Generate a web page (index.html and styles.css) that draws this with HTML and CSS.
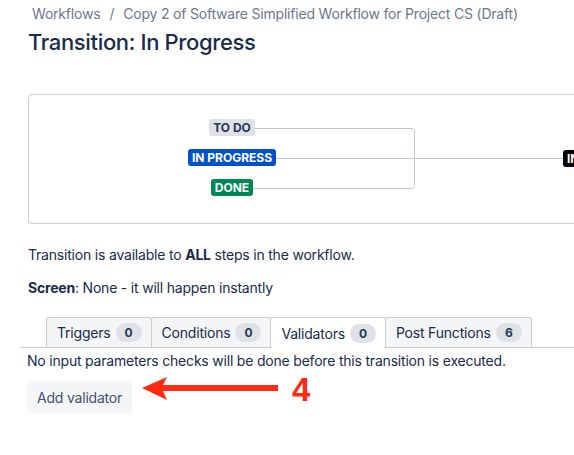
FILE: index.html
```html
<!DOCTYPE html>
<html lang="en">
<head>
    <meta charset="UTF-8">
    <meta name="viewport" content="width=device-width, initial-scale=1.0">
    <title>Transition: In Progress</title>
    <link rel="stylesheet" href="styles.css">
</head>
<body>
    <div class="page">
        <div class="breadcrumb">
            <span>Workflows</span><span class="sep">/</span><span>Copy 2 of Software Simplified Workflow for Project CS (Draft)</span>
        </div>
        <h1 class="title">Transition: In Progress</h1>

        <div class="diagram">
            <svg class="lines" width="600" height="128">
                <path d="M226 33.5 H382.5 Q385.5 33.5 385.5 36.5 V90.5 Q385.5 93.5 382.5 93.5 H224" fill="none" stroke="#c1c7d0" stroke-width="1"/>
                <path d="M247 63.5 H540" fill="none" stroke="#c1c7d0" stroke-width="1"/>
            </svg>
            <div class="statuses">
                <span class="lozenge todo">TO DO</span>
                <span class="lozenge progress">IN PROGRESS</span>
                <span class="lozenge done">DONE</span>
            </div>
            <span class="lozenge target">IN PROGRESS</span>
        </div>

        <p class="info">Transition is available to <strong>ALL</strong> steps in the workflow.</p>
        <p class="info screen"><strong>Screen</strong>: None - it will happen instantly</p>

        <div class="tabs">
            <div class="tab">Triggers <span class="count">0</span></div>
            <div class="tab">Conditions <span class="count">0</span></div>
            <div class="tab active">Validators <span class="count">0</span></div>
            <div class="tab">Post Functions <span class="count">6</span></div>
        </div>
        <p class="tab-msg">No input parameters checks will be done before this transition is executed.</p>
        <button class="add-btn">Add validator</button>
    </div>

    <!-- annotation -->
    <svg class="note" width="200" height="44" viewBox="0 0 200 44">
        <polygon points="2,17 27,6 23,14 138,14 138,20 23,20 27,29" fill="#ff2a12"/>
        <text x="152" y="30" fill="#ff2a12" font-family="Liberation Sans, Arial, sans-serif" font-size="33" font-weight="bold">4</text>
    </svg>
</body>
</html>
```

FILE: styles.css
```css
body {
    margin: 0;
    font-family: Inter, "Noto Sans", sans-serif;
    font-size: 14px;
    letter-spacing: -0.2px;
    color: #172b4d;
    overflow: hidden;
    position: relative;
}
.page {
    padding: 4px 0 0 28px;
}
.breadcrumb {
    padding-left: 4px;
    color: #6b778c;
    line-height: 20px;
}
.breadcrumb .sep {
    margin: 0 9px;
}
.title {
    font-size: 22px;
    font-weight: 500;
    letter-spacing: -0.35px;
    line-height: 28px;
    margin: 4px 0 0;
}
.diagram {
    position: relative;
    margin-top: 38px;
    width: 600px;
    height: 128px;
    border: 1px solid #ccc;
    border-radius: 4px;
}
.lines {
    position: absolute;
    left: 0;
    top: 0;
}
.statuses {
    position: absolute;
    left: 143px;
    top: 24px;
    width: 120px;
    display: flex;
    flex-direction: column;
    align-items: center;
    gap: 13px;
}
.lozenge {
    display: inline-block;
    height: 17px;
    line-height: 17px;
    padding: 0 4px;
    border-radius: 3px;
    font-size: 12px;
    font-weight: 700;
    letter-spacing: 0;
    white-space: nowrap;
}
.todo {
    background: #dfe1e6;
    color: #253858;
}
.progress {
    background: #0052cc;
    color: #fff;
}
.done {
    background: #00875a;
    color: #fff;
}
.target {
    position: absolute;
    left: 534px;
    top: 55px;
    background: #000;
    color: #fff;
}
.info {
    margin: 21px 0 0;
    line-height: 20px;
}
.info.screen {
    margin-top: 13px;
}
.tabs {
    display: flex;
    align-items: flex-end;
    margin: 19px 0 0 -8px;
    padding-left: 26px;
    border-bottom: 1px solid #ccc;
}
.tab {
    display: flex;
    align-items: center;
    gap: 5px;
    height: 30px;
    box-sizing: border-box;
    padding: 0 9px 0 10px;
    background: #f4f5f7;
    border: 1px solid #ccc;
    border-bottom: none;
    border-radius: 3px 3px 0 0;
    margin-right: -1px;
}
.tab.active {
    background: #fff;
    height: 31px;
    margin-bottom: -1px;
    position: relative;
}
.count {
    min-width: 26px;
    height: 19px;
    line-height: 19px;
    border-radius: 10px;
    background: #dfe1e6;
    color: #253858;
    font-size: 12px;
    font-weight: 700;
    text-align: center;
}
.tab-msg {
    margin: 3px 0 0 -1px;
    line-height: 20px;
}
.add-btn {
    margin: 10px 0 0 -1px;
    height: 32px;
    padding: 0 10px;
    border: none;
    border-radius: 3px;
    background: #f4f5f7;
    color: #42526e;
    font-family: Inter, "Noto Sans", sans-serif;
    font-size: 14px;
    letter-spacing: -0.2px;
}
.note {
    position: absolute;
    left: 140px;
    top: 371px;
}
```
